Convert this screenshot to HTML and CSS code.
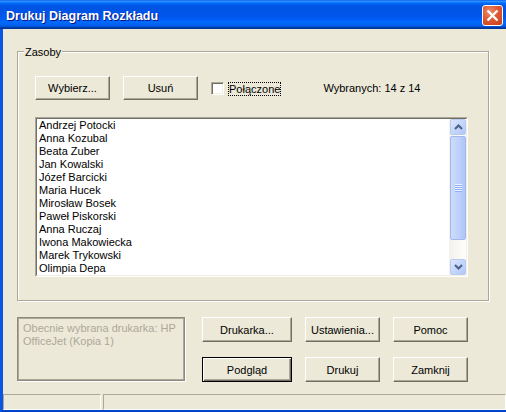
FILE: index.html
```html
<!DOCTYPE html>
<html lang="pl">
<head>
<meta charset="utf-8">
<title>Drukuj Diagram Rozkładu</title>
<link rel="stylesheet" href="styles.css">
</head>
<body>
<div class="window">
  <div class="titlebar">
    <span class="title">Drukuj Diagram Rozkładu</span>
    <button class="close" aria-label="Zamknij">
      <svg width="19" height="19" viewBox="0 0 19 19"><path d="M4.5 4.5 L14.5 14.5 M14.5 4.5 L4.5 14.5" stroke="#fff" stroke-width="2.4" fill="none"/></svg>
    </button>
  </div>
  <div class="frame">
    <div class="client">
      <div class="group">
        <div class="group-title">Zasoby</div>
        <div class="toolbar">
          <button class="btn btn-small">Wybierz...</button>
          <button class="btn btn-small gap">Usuń</button>
          <span class="checkbox"></span>
          <span class="focus">Połączone</span>
          <span class="count">Wybranych: 14 z 14</span>
        </div>
        <div class="listbox">
          <div class="listbox-inner">
            <ul class="items">
              <li>Andrzej Potocki</li>
              <li>Anna Kozubal</li>
              <li>Beata Zuber</li>
              <li>Jan Kowalski</li>
              <li>Józef Barcicki</li>
              <li>Maria Hucek</li>
              <li>Mirosław Bosek</li>
              <li>Paweł Piskorski</li>
              <li>Anna Ruczaj</li>
              <li>Iwona Makowiecka</li>
              <li>Marek Trykowski</li>
              <li>Olimpia Depa</li>
            </ul>
            <div class="vscroll">
              <div class="sb-btn"><svg width="9" height="6" viewBox="0 0 9 6"><path d="M1 5 L4.5 1.5 L8 5" stroke="#4D6185" stroke-width="2" fill="none"/></svg></div>
              <div class="sb-track">
                <div class="thumb"><span class="grip"></span></div>
              </div>
              <div class="sb-btn"><svg width="9" height="6" viewBox="0 0 9 6"><path d="M1 1 L4.5 4.5 L8 1" stroke="#4D6185" stroke-width="2" fill="none"/></svg></div>
            </div>
          </div>
        </div>
      </div>
      <div class="bottom">
        <div class="printer-info">Obecnie wybrana drukarka: HP OfficeJet (Kopia 1)</div>
        <div class="actions">
          <button class="btn">Drukarka...</button>
          <button class="btn">Ustawienia...</button>
          <button class="btn">Pomoc</button>
          <button class="btn default">Podgląd</button>
          <button class="btn">Drukuj</button>
          <button class="btn">Zamknij</button>
        </div>
      </div>
    </div>
    <div class="statusbar">
      <div class="panel panel-first"></div>
      <div class="panel panel-rest"></div>
    </div>
  </div>
</div>
</body>
</html>
```
FILE: styles.css
```css
html, body {
  margin: 0;
  padding: 0;
}
body {
  width: 506px;
  height: 412px;
  overflow: hidden;
  font: 11px "Liberation Sans", Arial, sans-serif;
  color: #000;
}
.window {
  width: 506px;
  height: 412px;
  display: flex;
  flex-direction: column;
  background: #ECE9D8;
}
.titlebar {
  height: 29px;
  flex: none;
  box-sizing: border-box;
  padding: 0 3px 0 6px;
  display: flex;
  align-items: center;
  justify-content: space-between;
  background: linear-gradient(to bottom,
    #0058EE 0%, #3593FF 4%, #288EFF 6%, #127DFF 8%, #036FFC 10%,
    #0262EE 14%, #0057E5 20%, #0054E3 24%, #0055EB 56%, #005BF5 66%,
    #026AFE 76%, #0062EF 86%, #0052D6 92%, #0040AB 94%, #003092 100%);
}
.title {
  color: #fff;
  font: bold 12.5px "Liberation Sans", Arial, sans-serif;
  line-height: 15px;
  margin-top: 3px;
  text-shadow: 1px 1px #0A1883;
}
.close {
  width: 21px;
  height: 21px;
  margin-top: 1px;
  padding: 0;
  box-sizing: border-box;
  border: 1px solid #fff;
  border-radius: 3px;
  background: radial-gradient(circle at 35% 30%, #EE8C6E 0%, #DD5A35 45%, #C53D17 100%);
  display: flex;
  align-items: center;
  justify-content: center;
}
.frame {
  flex: 1;
  display: flex;
  flex-direction: column;
  border-left: 3px solid #0A55E4;
  border-bottom: 2px solid #0044CC;
}
.client {
  flex: 1;
  padding: 22px 0 0 14px;
}
.group {
  width: 472px;
  box-sizing: border-box;
  border: 1px solid #ACA899;
  box-shadow: inset 1px 1px #fff, 1px 1px #fff;
  padding: 0 20px 23px 17px;
}
.group-title {
  width: fit-content;
  margin: -6px 0 0 -11px;
  padding: 0 1px;
  line-height: 13px;
  background: #ECE9D8;
}
.toolbar {
  margin-top: 17px;
  height: 24px;
  display: flex;
  align-items: center;
}
.btn {
  box-sizing: border-box;
  margin: 0;
  padding: 0;
  font: 11px "Liberation Sans", Arial, sans-serif;
  color: #000;
  background: #ECE9D8;
  border: 1px solid;
  border-color: #fff #716F64 #716F64 #fff;
  box-shadow: inset -1px -1px #ACA899;
}
.btn.default {
  border-color: #000;
  box-shadow: inset 1px 1px #fff, inset -1px -1px #716F64, inset -2px -2px #ACA899;
}
.btn-small {
  width: 75px;
  height: 24px;
}
.gap {
  margin-left: 13px;
}
.checkbox {
  width: 13px;
  height: 13px;
  box-sizing: border-box;
  margin-left: 13px;
  margin-top: 1px;
  border: 1px solid;
  border-color: #ACA899 #fff #fff #ACA899;
  box-shadow: inset 1px 1px #716F64, inset -1px -1px #F1EFE2;
  background: #fff;
}
.focus {
  margin-left: 4px;
  margin-top: 2px;
  border: 1px dotted #000;
  line-height: 12px;
  padding: 0;
}
.count {
  margin-left: 42px;
}
.listbox {
  margin-top: 17px;
  width: 433px;
  height: 160px;
  box-sizing: border-box;
  border: 1px solid;
  border-color: #ACA899 #fff #fff #ACA899;
}
.listbox-inner {
  height: 100%;
  box-sizing: border-box;
  border: 1px solid;
  border-color: #716F64 #F1EFE2 #F1EFE2 #716F64;
  background: #fff;
  display: flex;
}
.items {
  flex: 1;
  list-style: none;
  margin: 0;
  padding: 0 0 0 2px;
  line-height: 13px;
}
.vscroll {
  width: 17px;
  flex: none;
  display: flex;
  flex-direction: column;
  background: linear-gradient(to right, #F3F1EC, #FEFEFB);
}
.sb-btn {
  width: 16px;
  height: 16px;
  box-sizing: border-box;
  margin-left: 1px;
  border: 1px solid #B8CBF3;
  border-radius: 2px;
  background: linear-gradient(135deg, #DCE6FE 0%, #C5D6FC 50%, #B2C7F7 100%);
  display: flex;
  align-items: center;
  justify-content: center;
  flex: none;
}
.sb-track {
  flex: 1;
  padding-top: 1px;
}
.thumb {
  width: 16px;
  height: 104px;
  box-sizing: border-box;
  margin-left: 1px;
  border: 1px solid #A2B9EE;
  border-radius: 2px;
  background: linear-gradient(to right, #CDDCFD 0%, #BCD0FC 60%, #AEC5F8 100%);
  display: flex;
  align-items: center;
  justify-content: center;
}
.grip {
  width: 7px;
  height: 8px;
  background: repeating-linear-gradient(to bottom, #EEF4FE 0 1px, #8CB0F8 1px 2px);
}
.bottom {
  margin-top: 16px;
  display: flex;
  align-items: flex-start;
}
.printer-info {
  width: 168px;
  height: 64px;
  box-sizing: border-box;
  border: 1px solid #8E8B7E;
  box-shadow: inset 1px 1px #ACA899, inset -1px -1px #ACA899, 1px 1px #fff;
  padding: 4px 6px 0 5px;
  line-height: 13px;
  color: #ACA899;
}
.actions {
  margin-left: 17px;
  display: grid;
  grid-template-columns: 90px 75px 75px;
  grid-auto-rows: 25px;
  column-gap: 13px;
  row-gap: 15px;
}
.statusbar {
  height: 16px;
  flex: none;
  display: flex;
  gap: 2px;
}
.panel {
  box-sizing: border-box;
  height: 16px;
  border: 1px solid;
  border-color: #ACA899 #fff #fff #ACA899;
}
.panel-first {
  width: 98px;
}
.panel-rest {
  flex: 1;
}
```
